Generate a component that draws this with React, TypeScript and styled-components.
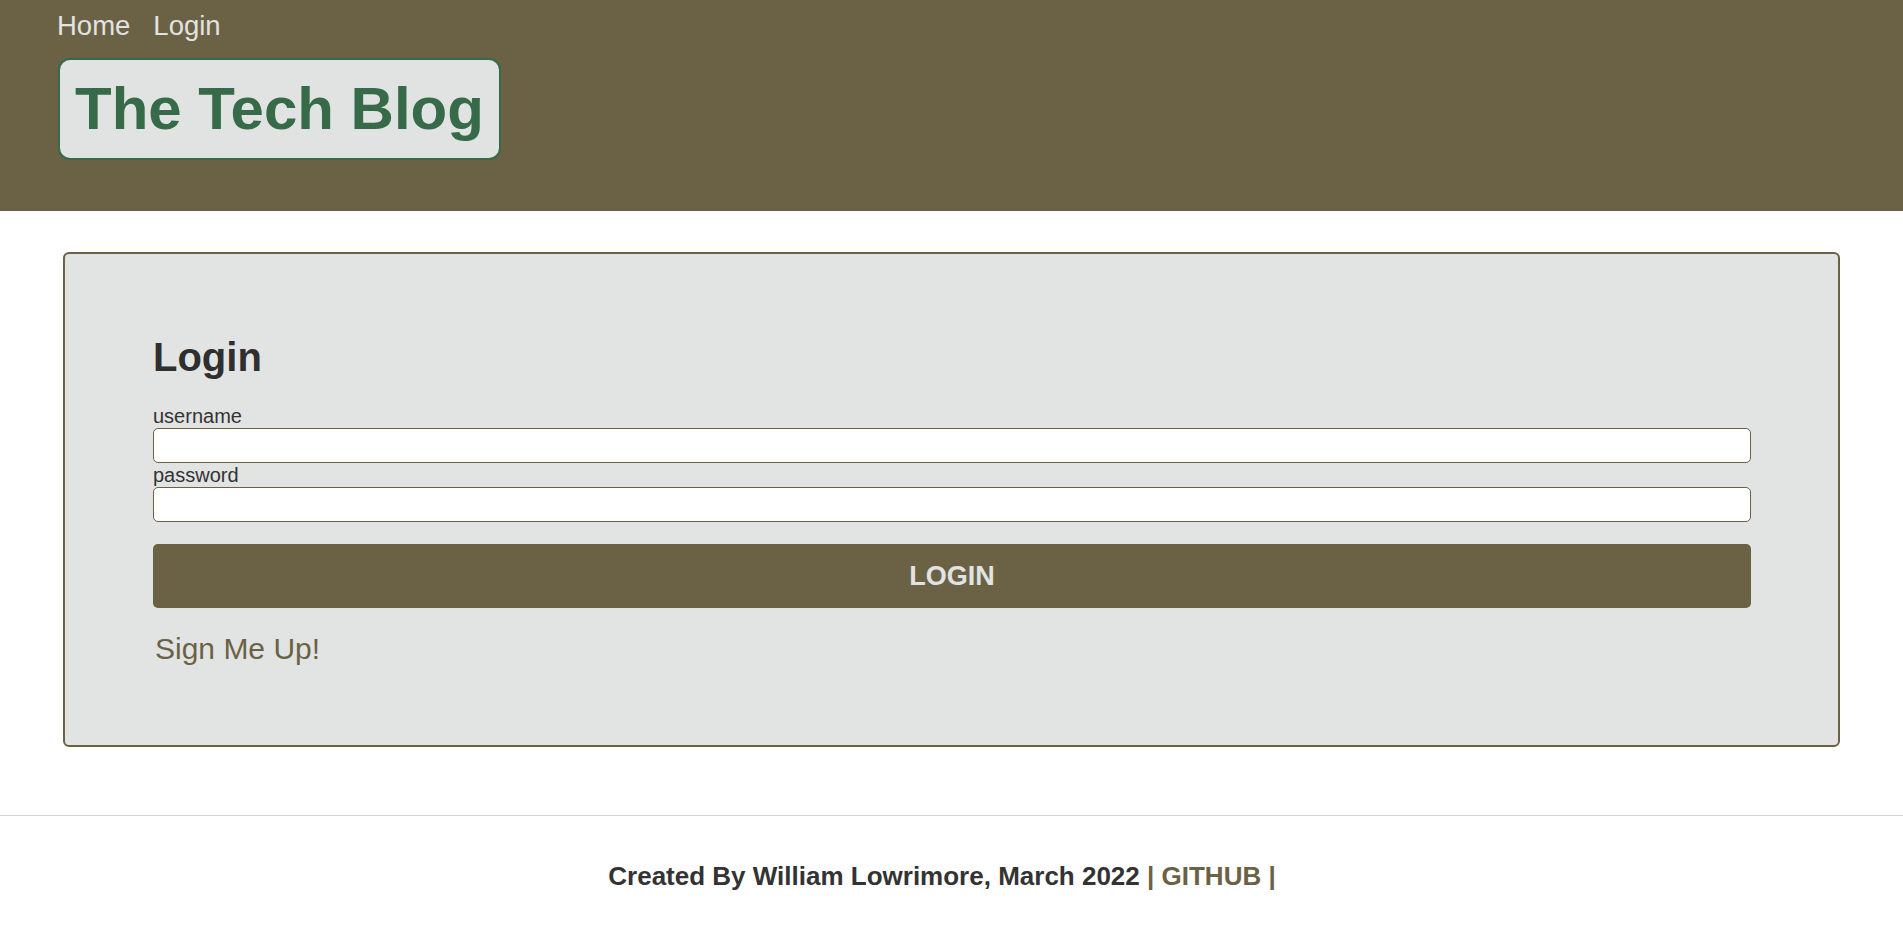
import React from "react";
import styled, { createGlobalStyle } from "styled-components";

const olive = "#6b6245";
const light = "#e1e3e2";

const GlobalStyle = createGlobalStyle`
  html, body {
    margin: 0;
    padding: 0;
    background: #ffffff;
    font-family: "Liberation Sans", Arial, Helvetica, sans-serif;
    color: #333333;
  }
  * { box-sizing: border-box; }
`;

const Header = styled.header`
  background: ${olive};
  padding: 10px 57px 51px;
`;

const Nav = styled.nav`
  display: flex;
  gap: 23px;
`;

const NavLink = styled.a`
  color: ${light};
  font-size: 27.5px;
  line-height: 31px;
  text-decoration: none;
`;

const TitleBox = styled.div`
  display: inline-block;
  margin-top: 17px;
  margin-left: 1px;
  padding: 15px 15px;
  background: ${light};
  border: 2px solid #366a48;
  border-radius: 12px;
`;

const Title = styled.h1`
  margin: 0;
  font-size: 60px;
  line-height: 68px;
  font-weight: 700;
  color: #366a48;
`;

const Main = styled.main`
  margin: 41px 63px 68px;
`;

const Card = styled.section`
  background: #e2e4e3;
  border: 2px solid ${olive};
  border-radius: 6px;
  padding: 80px 87px 79px 88px;
`;

const Heading = styled.h2`
  margin: 0 0 24px;
  font-size: 40px;
  line-height: 46px;
  font-weight: 700;
  color: #2f2f2f;
`;

const Form = styled.form`
  display: flex;
  flex-direction: column;
`;

const Label = styled.label`
  display: block;
  font-size: 20px;
  line-height: 24px;
  color: #333333;
`;

const Input = styled.input`
  display: block;
  width: 100%;
  height: 35px;
  margin: 0;
  padding: 2px 8px;
  background: #ffffff;
  border: 1px solid ${olive};
  border-radius: 5px;
  font-family: inherit;
  font-size: 18px;
`;

const Button = styled.button`
  margin-top: 22px;
  height: 64px;
  width: 100%;
  background: ${olive};
  color: ${light};
  border: none;
  border-radius: 5px;
  font-family: inherit;
  font-size: 27px;
  font-weight: 700;
  cursor: pointer;
`;

const SignUp = styled.a`
  display: block;
  margin-top: 24px;
  padding-left: 2px;
  font-size: 30px;
  line-height: 34px;
  color: ${olive};
  text-decoration: none;
`;

const Footer = styled.footer`
  border-top: 1px solid #d3d3d3;
  padding: 45px 0 45px;
  display: flex;
  justify-content: center;
`;

const FooterText = styled.p`
  margin: 0;
  padding-right: 19px;
  font-size: 26px;
  line-height: 30px;
  font-weight: 700;
  color: #333333;
`;

const FooterLink = styled.a`
  color: ${olive};
  text-decoration: none;
`;

const Pipe = styled.span`
  color: ${olive};
`;

export default function App() {
  return (
    <>
      <GlobalStyle />
      <Header>
        <Nav>
          <NavLink href="#">Home</NavLink>
          <NavLink href="#">Login</NavLink>
        </Nav>
        <TitleBox>
          <Title>The Tech Blog</Title>
        </TitleBox>
      </Header>
      <Main>
        <Card>
          <Heading>Login</Heading>
          <Form onSubmit={(e) => e.preventDefault()}>
            <Label htmlFor="username">username</Label>
            <Input id="username" type="text" />
            <Label htmlFor="password">password</Label>
            <Input id="password" type="password" />
            <Button type="submit">LOGIN</Button>
          </Form>
          <SignUp href="#">Sign Me Up!</SignUp>
        </Card>
      </Main>
      <Footer>
        <FooterText>
          Created By William Lowrimore, March 2022 <Pipe>|</Pipe>{" "}
          <FooterLink href="#">GITHUB</FooterLink> <Pipe>|</Pipe>
        </FooterText>
      </Footer>
    </>
  );
}
